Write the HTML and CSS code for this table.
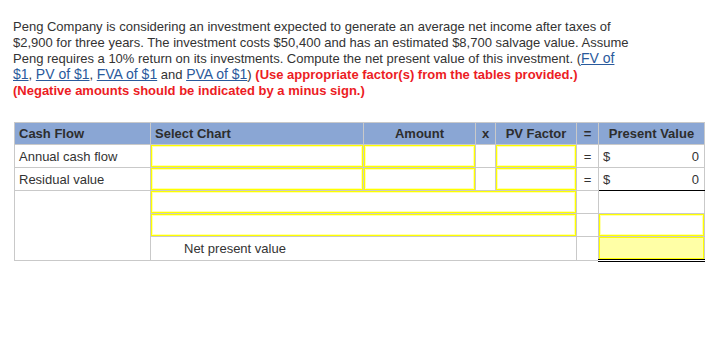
FILE: index.html
```html
<!DOCTYPE html>
<html>
<head>
<meta charset="utf-8">
<link rel="stylesheet" href="styles.css">
</head>
<body>
<div class="page">
  <p class="question">Peng Company is considering an investment expected to generate an average net income after taxes of $2,900 for three years. The investment costs $50,400 and has an estimated $8,700 salvage value. Assume Peng requires a 10% return on its investments. Compute the net present value of this investment. (<a href="#">FV of $1</a>, <a href="#">PV of $1</a>, <a href="#">FVA of $1</a> and <a href="#">PVA of $1</a>) <span class="warn">(Use appropriate factor(s) from the tables provided.)<br>(Negative amounts should be indicated by a minus sign.)</span></p>

  <table class="npv">
    <colgroup>
      <col class="c-flow">
      <col class="c-chart">
      <col class="c-amount">
      <col class="c-x">
      <col class="c-factor">
      <col class="c-eq">
      <col class="c-pv">
    </colgroup>
    <thead>
      <tr>
        <th class="left">Cash Flow</th>
        <th class="left">Select Chart</th>
        <th>Amount</th>
        <th>x</th>
        <th>PV Factor</th>
        <th>=</th>
        <th>Present Value</th>
      </tr>
    </thead>
    <tbody>
      <tr>
        <td class="label">Annual cash flow</td>
        <td class="in"><div class="box"></div></td>
        <td class="in"><div class="box"></div></td>
        <td></td>
        <td class="in"><div class="box"></div></td>
        <td class="eq">=</td>
        <td class="money"><span>$</span><span>0</span></td>
      </tr>
      <tr>
        <td class="label">Residual value</td>
        <td class="in"><div class="box"></div></td>
        <td class="in"><div class="box"></div></td>
        <td></td>
        <td class="in"><div class="box"></div></td>
        <td class="eq">=</td>
        <td class="money total-line"><span>$</span><span>0</span></td>
      </tr>
      <tr>
        <td rowspan="3"></td>
        <td colspan="4" class="in"><div class="box"></div></td>
        <td></td>
        <td class="total-top"></td>
      </tr>
      <tr>
        <td colspan="4" class="in"><div class="box"></div></td>
        <td></td>
        <td class="in"><div class="box"></div></td>
      </tr>
      <tr>
        <td colspan="4" class="npv-label">Net present value</td>
        <td></td>
        <td class="in final"><div class="box fill"></div></td>
      </tr>
    </tbody>
  </table>
</div>
</body>
</html>
```

FILE: styles.css
```css
html, body {
  margin: 0;
  padding: 0;
  background: #ffffff;
}

body {
  font-family: "Liberation Sans", Arial, sans-serif;
  font-size: 13px;
  color: #333333;
}

.page {
  padding: 19px 14px 0 13px;
}

.question {
  margin: 0;
  width: 618px;
  line-height: 16px;
}

.question a {
  color: #2a5a9c;
  font-size: 14px;
  line-height: 1;
  text-decoration: underline;
}

.warn {
  color: #ec1c24;
  font-weight: bold;
}

.npv {
  margin-top: 23px;
  margin-left: 1px;
  border-collapse: collapse;
  table-layout: fixed;
  width: 691px;
}

.c-flow { width: 136px; }
.c-chart { width: 213px; }
.c-amount { width: 112px; }
.c-x { width: 20px; }
.c-factor { width: 81px; }
.c-eq { width: 22px; }
.c-pv { width: 106px; }

.npv th,
.npv td {
  border: 1px solid #c9c9c9;
  height: 22px;
  padding: 0;
  box-sizing: border-box;
}

.npv th {
  background: #8aa6d4;
  font-weight: bold;
  color: #2d2d2d;
  text-align: center;
  padding: 0 4px;
}

.npv th.left {
  text-align: left;
}

.npv td.label {
  padding: 0 4px;
  vertical-align: middle;
}

.npv td.in {
  padding: 0;
}

.box {
  box-sizing: border-box;
  height: 22px;
  border: 1px solid #ffff00;
  box-shadow: inset 0 0 0 1px #ffffb0;
  background: #ffffff;
}

.box.fill {
  background: #ffffa6;
  box-shadow: none;
}

.npv td.eq {
  text-align: center;
}

.npv td.money {
  padding: 0 5px 0 4px;
}

.money {
  white-space: nowrap;
}

.npv td.money span:first-child {
  float: left;
}

.npv td.money span:last-child {
  float: right;
}

.npv td.total-line {
  border-bottom: 1px solid #000000;
}

.npv td.final {
  border-top: 1px solid #000000;
  border-bottom: 3px double #000000;
}

.npv td.npv-label {
  padding-left: 33px;
}
```
